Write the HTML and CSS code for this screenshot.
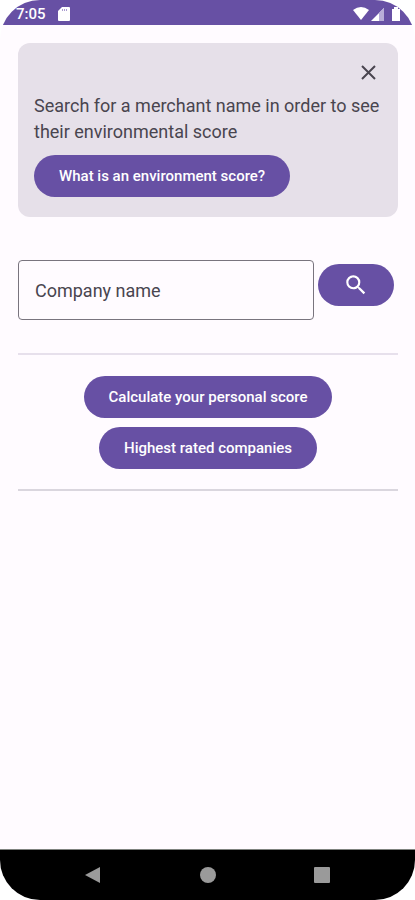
FILE: index.html
```html
<!DOCTYPE html>
<html lang="en">
<head>
    <meta charset="utf-8">
    <meta name="viewport" content="width=device-width, initial-scale=1">
    <title>Environment score</title>
    <link rel="stylesheet" href="styles.css">
</head>
<body>
    <div class="phone">
        <header class="status-bar">
            <span class="clock">7:05</span>
            <svg class="sd-icon" width="12" height="14" viewBox="0 0 12 14">
                <path d="M4 0h7a1 1 0 0 1 1 1v12a1 1 0 0 1-1 1H1a1 1 0 0 1-1-1V4z" fill="#fff"/>
                <path d="M4 3h6" stroke="#a99bd0" stroke-width="2" stroke-dasharray="1 1"/>
            </svg>
            <svg class="signal-icons" width="50" height="16" viewBox="0 0 50 16">
                <path d="M1 4Q9 -2 17 4L9 14z" fill="#fff"/>
                <path d="M19 15L32 2v13z" fill="#fff"/>
                <path d="M27 7L32 2v13h-5z" fill="#b8add8"/>
                <path d="M40 3h2V1h4v2h2v12h-8z" fill="#fff"/>
            </svg>
        </header>

        <main>
            <section class="card">
                <button type="button" class="close" aria-label="Close">
                    <svg width="24" height="24" viewBox="0 0 24 24">
                        <path d="M5 5l13 13M18 5L5 18" stroke="#49454f" stroke-width="2"/>
                    </svg>
                </button>
                <p>Search for a merchant name in order to see their environmental score</p>
                <button type="button" class="btn">What is an environment score?</button>
            </section>

            <form class="search">
                <input type="text" id="company" name="company" placeholder="Company name" aria-label="Company name">
                <button type="submit" class="btn search-btn" aria-label="Search">
                    <svg width="26" height="26" viewBox="0 0 24 24">
                        <path fill="#fff" d="M15.500 14h-.79l-.28-.27A6.470 6.470 0 0 0 16 9.500 6.500 6.500 0 1 0 9.500 16c1.610 0 3.090-.59 4.230-1.570l.27.28v.79l5 4.990L20.490 19l-4.990-5zm-6 0C7.010 14 5 11.990 5 9.500S7.010 5 9.500 5 14 7.010 14 9.500 11.990 14 9.500 14z"/>
                    </svg>
                </button>
            </form>

            <div class="actions">
                <button type="button" class="btn">Calculate your personal score</button>
                <button type="button" class="btn">Highest rated companies</button>
            </div>
        </main>

        <nav class="nav-bar">
            <button type="button" aria-label="Back">
                <svg width="18" height="18" viewBox="0 0 18 18"><path d="M0 9L15 1v16z" fill="#9a9a9a"/></svg>
            </button>
            <button type="button" aria-label="Home">
                <svg width="18" height="18" viewBox="0 0 18 18"><circle cx="9" cy="9" r="8" fill="#9a9a9a"/></svg>
            </button>
            <button type="button" aria-label="Recent apps">
                <svg width="18" height="18" viewBox="0 0 18 18"><rect x="1" y="1" width="16" height="16" rx="1" fill="#9a9a9a"/></svg>
            </button>
        </nav>
    </div>
</body>
</html>
```
FILE: styles.css
```css
* {
    box-sizing: border-box;
}

body {
    margin: 0;
    background-color: #fff;
    font-family: Roboto, sans-serif;
    color: #49454f;
}

button {
    border: none;
    padding: 0;
    background: none;
    font-family: inherit;
    cursor: pointer;
}

svg {
    display: block;
}

.phone {
    display: flex;
    flex-direction: column;
    min-height: 100vh;
    border-radius: 40px;
    overflow: hidden;
    background-color: #fffbff;
}

.status-bar {
    display: flex;
    align-items: center;
    height: 25px;
    padding: 2px 13px 0 16px;
    background-color: #6750a4;
    color: #fff;
}

.clock {
    font-size: 15px;
    font-weight: 500;
}

.sd-icon {
    margin-left: 12px;
}

.signal-icons {
    margin-left: auto;
}

main {
    flex: 1;
    padding: 18px 17px 0 18px;
}

.card {
    padding: 16px;
    padding-bottom: 20px;
    border-radius: 12px;
    background-color: #e6e0e9;
}

.close {
    display: block;
    margin: 2px 1px 8px auto;
}

.card p {
    margin: 0 0 10px;
    font-size: 18px;
    line-height: 26px;
}

.btn {
    height: 42px;
    padding: 0 25px;
    border-radius: 21px;
    background-color: #6750a4;
    color: #fff;
    font-size: 15px;
    font-weight: 500;
}

.search {
    display: flex;
    align-items: flex-start;
    gap: 4px;
    margin-top: 43px;
    padding: 0 4px 33px 0;
}

.search input {
    flex: 1;
    min-width: 0;
    height: 60px;
    padding: 0 16px;
    border: 1px solid #79747e;
    border-radius: 4px;
    background: none;
    color: #49454f;
    font-family: inherit;
    font-size: 18px;
}

.search input::placeholder {
    color: #49454f;
    opacity: 1;
}

.search-btn {
    margin-top: 4px;
}

.actions {
    display: flex;
    flex-direction: column;
    align-items: center;
    gap: 9px;
    padding: 21px 0 20px;
    border-top: 2px solid #e7e0ec;
    border-bottom: 2px solid #dad6de;
}

.nav-bar {
    display: flex;
    justify-content: center;
    align-items: center;
    gap: 96px;
    height: 51px;
    border-top: 1px solid #7f837f;
    background-color: #000;
}
```
